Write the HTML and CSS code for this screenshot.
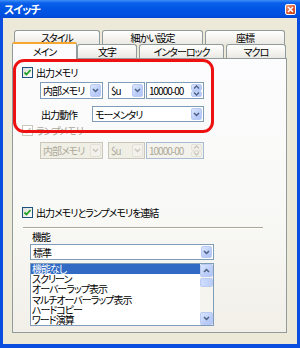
FILE: index.html
```html
<!DOCTYPE html>
<html>
<head>
    <title>スイッチ</title>
    <link rel="stylesheet" href="styles.css">
</head>
<body>
    <div class="window">
        <div class="titlebar">
            <span class="title">スイッチ</span>
            <span class="close">
                <svg width="7" height="7" viewBox="0 0 7 7"><path d="M1 1 L6 6 M6 1 L1 6" stroke="#fff" stroke-width="1.6"/></svg>
            </span>
        </div>
        <div class="client">
            <div class="tabrow back">
                <div class="tab tab-style">スタイル</div>
                <div class="tab tab-detail">細かい設定</div>
                <div class="tab tab-coord">座標</div>
            </div>
            <div class="tabrow front">
                <div class="tab selected tab-main">メイン</div>
                <div class="tab tab-text">文字</div>
                <div class="tab tab-interlock">インターロック</div>
                <div class="tab tab-macro">マクロ</div>
            </div>
            <div class="panel">
                <div class="check row-out">
                    <span class="box"><svg width="9" height="9" viewBox="0 0 9 9"><path d="M1.5 4.5 L3.5 6.5 L7.5 2" fill="none" stroke="#21a121" stroke-width="1.8"/></svg></span>
                    出力メモリ
                </div>
                <div class="fields row-mem">
                    <div class="combo combo-area"><span class="value">内部メモリ</span><span class="drop"><svg width="7" height="5" viewBox="0 0 7 5"><path d="M1 1 L3.5 3.5 L6 1" fill="none" stroke="#4d6185" stroke-width="1.5"/></svg></span></div>
                    <div class="combo combo-reg"><span class="value">$u</span><span class="drop"><svg width="7" height="5" viewBox="0 0 7 5"><path d="M1 1 L3.5 3.5 L6 1" fill="none" stroke="#4d6185" stroke-width="1.5"/></svg></span></div>
                    <div class="combo spin"><span class="value">10000-00</span><span class="spin-btns"><span class="spin-up"><svg width="7" height="4" viewBox="0 0 7 4"><path d="M1 3.5 L3.5 1 L6 3.5" fill="none" stroke="#4d6185" stroke-width="1.4"/></svg></span><span class="spin-down"><svg width="7" height="4" viewBox="0 0 7 4"><path d="M1 0.5 L3.5 3 L6 0.5" fill="none" stroke="#4d6185" stroke-width="1.4"/></svg></span></span></div>
                </div>
                <div class="fields row-action">
                    <span class="label">出力動作</span>
                    <div class="combo combo-action"><span class="value">モーメンタリ</span><span class="drop"><svg width="7" height="5" viewBox="0 0 7 5"><path d="M1 1 L3.5 3.5 L6 1" fill="none" stroke="#4d6185" stroke-width="1.5"/></svg></span></div>
                </div>
                <div class="check disabled row-lamp">
                    <span class="box"><svg width="9" height="9" viewBox="0 0 9 9"><path d="M1.5 4.5 L3.5 6.5 L7.5 2" fill="none" stroke="#cac8bb" stroke-width="1.8"/></svg></span>
                    ランプメモリ
                </div>
                <div class="fields disabled row-lampmem">
                    <div class="combo combo-area"><span class="value">内部メモリ</span><span class="drop"><svg width="7" height="5" viewBox="0 0 7 5"><path d="M1 1 L3.5 3.5 L6 1" fill="none" stroke="#c9c7ba" stroke-width="1.5"/></svg></span></div>
                    <div class="combo combo-reg"><span class="value">$u</span><span class="drop"><svg width="7" height="5" viewBox="0 0 7 5"><path d="M1 1 L3.5 3.5 L6 1" fill="none" stroke="#c9c7ba" stroke-width="1.5"/></svg></span></div>
                    <div class="combo spin"><span class="value">10000-00</span><span class="spin-btns"><span class="spin-up"><svg width="7" height="4" viewBox="0 0 7 4"><path d="M1 3.5 L3.5 1 L6 3.5" fill="none" stroke="#c9c7ba" stroke-width="1.4"/></svg></span><span class="spin-down"><svg width="7" height="4" viewBox="0 0 7 4"><path d="M1 0.5 L3.5 3 L6 0.5" fill="none" stroke="#c9c7ba" stroke-width="1.4"/></svg></span></span></div>
                </div>
                <div class="check row-link">
                    <span class="box"><svg width="9" height="9" viewBox="0 0 9 9"><path d="M1.5 4.5 L3.5 6.5 L7.5 2" fill="none" stroke="#21a121" stroke-width="1.8"/></svg></span>
                    出力メモリとランプメモリを連結
                </div>
                <div class="separator"></div>
                <div class="func-label">機能</div>
                <div class="combo combo-func"><span class="value">標準</span><span class="drop"><svg width="7" height="5" viewBox="0 0 7 5"><path d="M1 1 L3.5 3.5 L6 1" fill="none" stroke="#4d6185" stroke-width="1.5"/></svg></span></div>
                <div class="listbox">
                    <ul class="items">
                        <li class="selected">機能なし</li>
                        <li>スクリーン</li>
                        <li>オーバーラップ表示</li>
                        <li>マルチオーバーラップ表示</li>
                        <li>ハードコピー</li>
                        <li>ワード演算</li>
                    </ul>
                    <div class="scrollbar">
                        <span class="sb-btn"><svg width="7" height="5" viewBox="0 0 7 5"><path d="M1 4 L3.5 1.5 L6 4" fill="none" stroke="#4d6185" stroke-width="1.5"/></svg></span>
                        <span class="sb-thumb"></span>
                        <span class="sb-track"></span>
                        <span class="sb-btn"><svg width="7" height="5" viewBox="0 0 7 5"><path d="M1 1 L3.5 3.5 L6 1" fill="none" stroke="#4d6185" stroke-width="1.5"/></svg></span>
                    </div>
                </div>
            </div>
        </div>
        <div class="highlight"></div>
    </div>
</body>
</html>
```

FILE: styles.css
```css
body {
    margin: 0;
    font-family: "Noto Sans CJK JP", sans-serif;
    font-size: 10px;
    letter-spacing: -1px;
    font-feature-settings: "palt";
    color: #000;
}

.window {
    position: relative;
    width: 300px;
    height: 348px;
    display: flex;
    flex-direction: column;
    background: #0a4ee0;
}

.titlebar {
    height: 18px;
    flex: none;
    display: flex;
    align-items: center;
    justify-content: space-between;
    padding: 0 4px 0 4px;
    background: linear-gradient(#3d8ff7 0, #0a5fea 3px, #0055e5 9px, #0050e0 15px, #0046d4 18px);
}

.title {
    color: #fff;
    font-weight: bold;
    font-size: 11px;
    letter-spacing: -1px;
}

.close {
    width: 11px;
    height: 11px;
    margin-top: 1px;
    display: flex;
    align-items: center;
    justify-content: center;
    border: 1px solid #fff;
    border-radius: 2px;
    box-sizing: border-box;
    background: linear-gradient(135deg, #f0a080, #e0542a 60%, #c8401c);
}

.client {
    flex: 1;
    margin: 0 3px 4px 3px;
    padding: 12px 10px 0 9px;
    background: #ece9d8;
}

.tabrow {
    display: flex;
    height: 14px;
    align-items: flex-end;
}

.tabrow.back {
    padding-left: 2px;
}

.tab {
    box-sizing: border-box;
    height: 14px;
    border: 1px solid #919b9c;
    border-bottom: none;
    border-radius: 3px 3px 0 0;
    background: linear-gradient(#fff, #f3f2ee 60%, #e9e8e2);
    text-align: center;
    line-height: 13px;
}

.tab-style { width: 86px; }
.tab-detail { width: 101px; margin-left: 2px; }
.tab-coord { width: 80px; margin-left: 2px; }

.tab.selected {
    position: relative;
    z-index: 1;
    height: 17px;
    margin-bottom: -1px;
    border-top: 2px solid #f6a732;
    border-radius: 2px 2px 0 0;
    background: #fcfcfe;
    line-height: 15px;
}

.tab-main { width: 65px; }
.tab-text { width: 60px; margin-left: 0; }
.tab-interlock { width: 85px; margin-left: 2px; }
.tab-macro { width: 60px; margin-left: 2px; }

.panel {
    box-sizing: border-box;
    width: 275px;
    height: 275px;
    padding: 7px 0 0 9px;
    border: 1px solid #919b9c;
    background: linear-gradient(#fcfcfe, #f8f8f5 60%, #f1efe8);
}

.check {
    display: flex;
    align-items: center;
    height: 12px;
    gap: 3px;
    white-space: nowrap;
}

.box {
    box-sizing: border-box;
    width: 11px;
    height: 11px;
    display: flex;
    align-items: center;
    justify-content: center;
    border: 1px solid #1c5180;
    background: linear-gradient(135deg, #dcdcd7, #fff);
}

.check.disabled {
    color: #aca899;
}

.check.disabled .box {
    border-color: #cac8bb;
    background: #fff;
}

.fields {
    display: flex;
    align-items: center;
}

.row-mem {
    margin: 4px 0 0 18px;
    height: 17px;
}

.row-action {
    margin: 7px 0 0 19px;
    height: 16px;
}

.row-lamp {
    margin-top: 2px;
}

.row-lampmem {
    margin: 6px 0 0 18px;
    height: 17px;
}

.row-link {
    margin-top: 47px;
}

.label {
    width: 51px;
}

.combo {
    box-sizing: border-box;
    height: 100%;
    display: flex;
    align-items: stretch;
    border: 1px solid #7f9db9;
    background: #fff;
    white-space: nowrap;
}

.combo .value {
    flex: 1;
    padding-left: 2px;
    display: flex;
    align-items: center;
    overflow: hidden;
}

.drop,
.spin-up,
.spin-down,
.sb-btn {
    display: flex;
    align-items: center;
    justify-content: center;
    box-sizing: border-box;
    border: 1px solid #b9cbf3;
    border-radius: 2px;
    background: linear-gradient(135deg, #dce6fd, #bccdf9 60%, #b0c4f5);
}

.drop {
    width: 11px;
    margin: 1px;
}

.combo-area { width: 63px; }
.combo-reg { width: 37px; margin-left: 5px; }
.spin { width: 58px; margin-left: 1px; }
.combo-action { width: 112px; }

.spin-btns {
    width: 11px;
    margin: 1px;
    display: flex;
    flex-direction: column;
}

.spin-up,
.spin-down {
    flex: 1;
}

.fields.disabled {
    color: #aca899;
}

.fields.disabled .combo {
    border-color: #c9c7ba;
    background: #f0efe6;
}

.fields.disabled .spin {
    border-color: #a9bad5;
    background: #f3f2ec;
}

.fields.disabled .drop,
.fields.disabled .spin-up,
.fields.disabled .spin-down {
    border-color: #e4e2d8;
    background: #f2f1eb;
}

.separator {
    width: 240px;
    height: 0;
    margin: 9px 0 0 1px;
    border-top: 1px solid #aca899;
    border-bottom: 1px solid #fff;
}

.func-label {
    height: 13px;
    line-height: 13px;
    margin: 1px 0 0 10px;
}

.combo-func {
    width: 184px;
    height: 16px;
    margin: 1px 0 0 8px;
}

.listbox {
    box-sizing: border-box;
    width: 184px;
    height: 63px;
    margin: 3px 0 0 8px;
    display: flex;
    border: 1px solid #7f9db9;
    background: #fff;
    overflow: hidden;
}

.items {
    flex: 1;
    list-style: none;
    margin: 0;
    padding: 0;
}

.items li {
    height: 10.2px;
    line-height: 10.2px;
    padding-left: 1px;
    white-space: nowrap;
}

.items li.selected {
    background: #316ac5;
    color: #fff;
}

.scrollbar {
    width: 13px;
    display: flex;
    flex-direction: column;
    background: #f5f4ee;
}

.sb-btn {
    height: 13px;
}

.sb-thumb {
    height: 9px;
    margin-top: 1px;
    box-sizing: border-box;
    border: 1px solid #b9cbf3;
    border-radius: 2px;
    background: linear-gradient(90deg, #cfdcfc, #bccdf9);
}

.sb-track {
    flex: 1;
}

.highlight {
    position: absolute;
    left: 13px;
    top: 59px;
    width: 201px;
    height: 74px;
    box-sizing: border-box;
    border: 3px solid #ee1111;
    border-radius: 11px;
}
```
